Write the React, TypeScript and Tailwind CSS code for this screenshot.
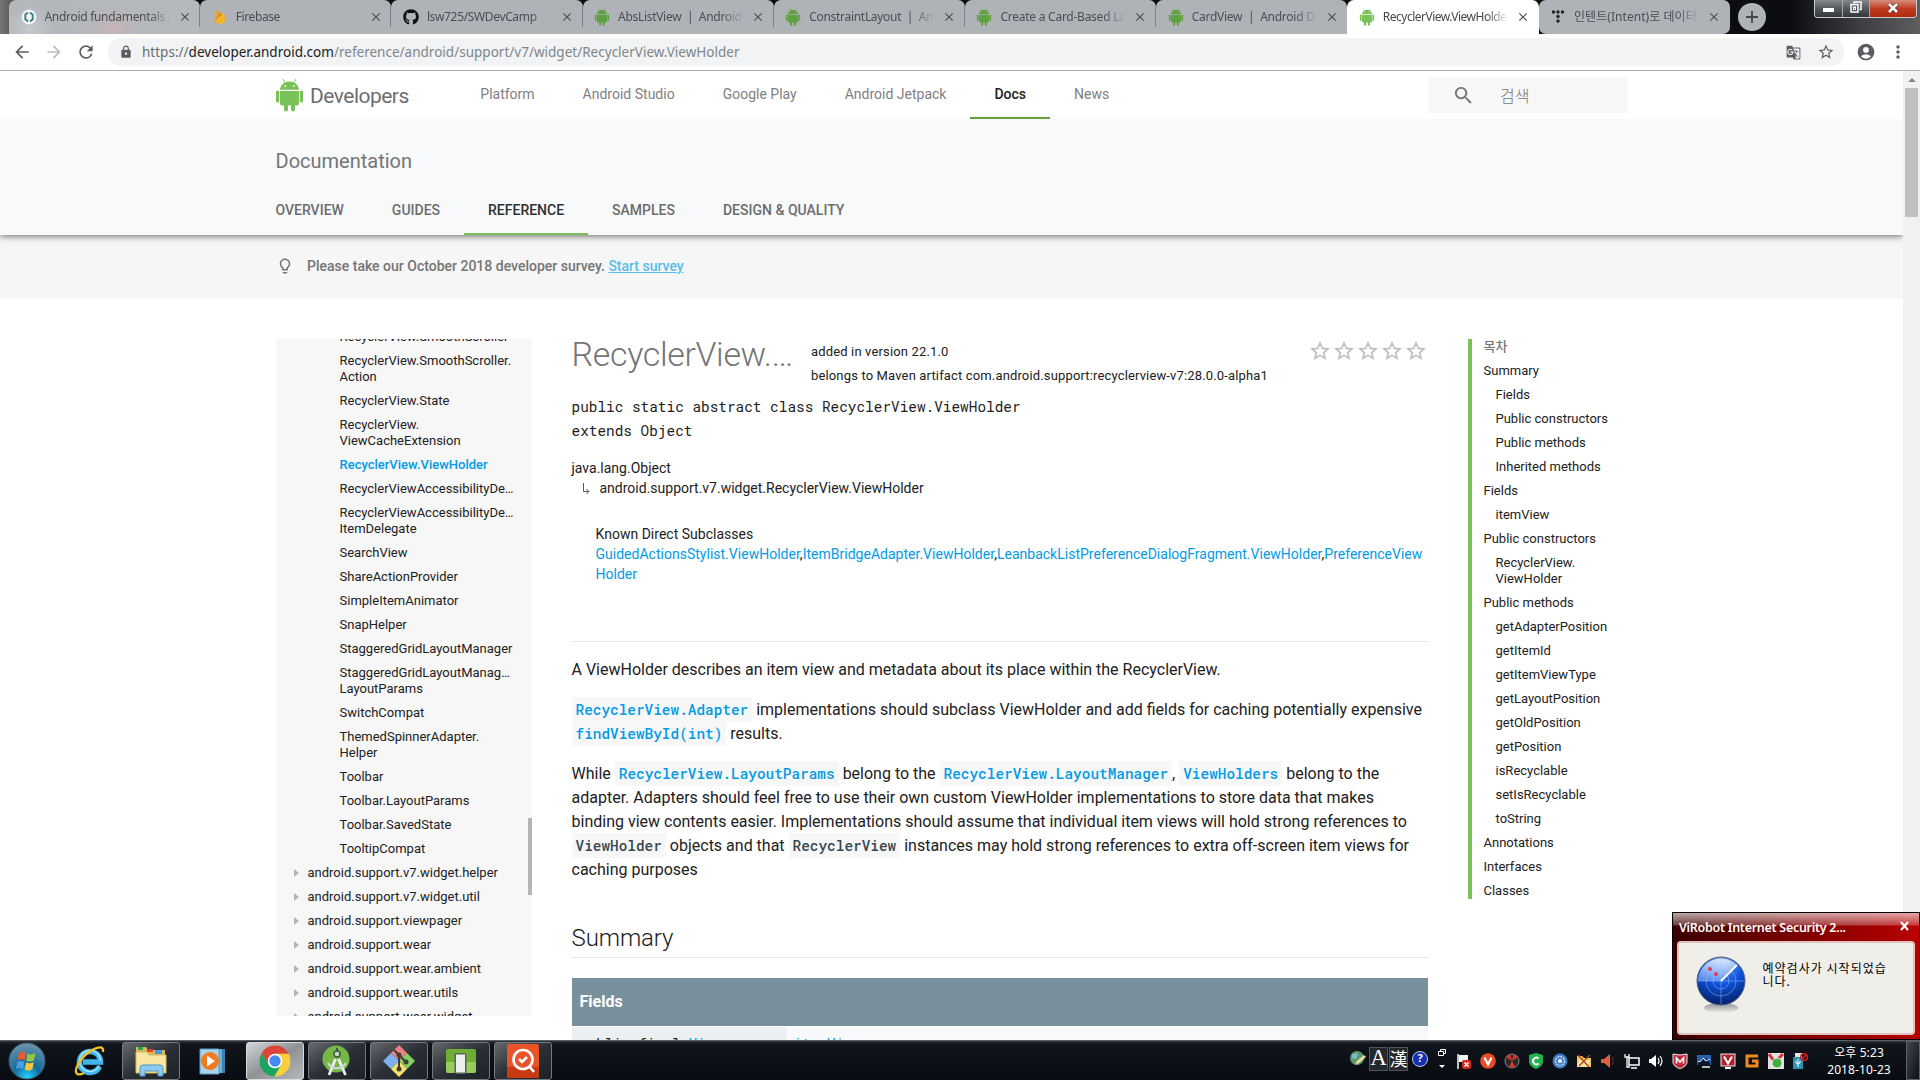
import React from "react";
import {
  MdAccountCircle,
  MdArrowBack,
  MdArrowForward,
  MdClose,
  MdGTranslate,
  MdLightbulbOutline,
  MdLock,
  MdMoreVert,
  MdRefresh,
  MdSearch,
  MdStarBorder,
} from "react-icons/md";
import { FaGithub } from "react-icons/fa";

/* ---------- Browser chrome ---------- */

function UdacityIcon() {
  return (
    <svg width="16" height="16" viewBox="0 0 16 16">
      <circle cx="8" cy="8" r="7.5" fill="#eef3f5" />
      <path d="M7 3.600 4.300 5.800v4.400L7 12.400M9 3.600l2.700 2.200v4.400L9 12.400" fill="none" stroke="#3d7f8c" strokeWidth="1.900" />
    </svg>
  );
}

function FirebaseIcon() {
  return (
    <svg width="16" height="16" viewBox="0 0 16 16">
      <path d="M2.500 12.500 4.500.5 7 5z" fill="#f2a21c" />
      <path d="M2.500 12.500 8.500 2.500 10.500 7z" fill="#e08a12" />
      <path d="M2.500 12.500 12 3.500l1.500 9-5.500 3.200z" fill="#f5b52b" />
    </svg>
  );
}

function DotsIcon() {
  return (
    <svg width="16" height="16" viewBox="0 0 16 16" fill="#222">
      <circle cx="3.500" cy="3" r="1.700" />
      <circle cx="8" cy="3" r="1.700" />
      <circle cx="12.500" cy="3" r="1.700" />
      <circle cx="8" cy="7.500" r="1.700" />
      <circle cx="8" cy="12" r="1.700" />
    </svg>
  );
}

function Droid({ color, width, height, eye }: { color: string; width: number; height: number; eye: string }) {
  return (
    <svg width={width} height={height} viewBox="0 0 29 34" fill={color} className="shrink-0">
      <path d="M5 11.800C5.300 7 9.500 3.500 14.500 3.500S23.700 7 24 11.800z" />
      <path d="M10 4.500 8 1M19 4.500 21 1" stroke={color} strokeWidth=".9" />
      <path d="M5 13h19v12.500a2 2 0 0 1-2 2h-2v4a2 2 0 0 1-4 0v-4h-3v4a2 2 0 0 1-4 0v-4H7a2 2 0 0 1-2-2z" />
      <rect x="1" y="12.500" width="3.200" height="12" rx="1.600" />
      <rect x="24.800" y="12.500" width="3.200" height="12" rx="1.600" />
      <circle cx="10.200" cy="8" r=".9" fill={eye} />
      <circle cx="18.800" cy="8" r=".9" fill={eye} />
    </svg>
  );
}

const droid = <Droid color="#5fa043" eye="#afb2b7" width={16} height={18} />;

const tabs = [
  { icon: <UdacityIcon />, title: "Android fundamentals (", tracking: "tracking-[-0.3px]" },
  { icon: <FirebaseIcon />, title: "Firebase", tracking: "tracking-[-0.4px]" },
  { icon: <FaGithub size={16} color="#111" />, title: "lsw725/SWDevCamp", tracking: "tracking-[-0.35px]" },
  { icon: droid, title: "AbsListView  |  Android", tracking: "tracking-[-0.3px]" },
  { icon: droid, title: "ConstraintLayout  |  And", tracking: "tracking-[-0.3px]" },
  { icon: droid, title: "Create a Card-Based Lay", tracking: "tracking-[-0.25px]" },
  { icon: droid, title: "CardView  |  Android Dev", tracking: "tracking-[-0.25px]" },
  {
    icon: <Droid color="#78c257" eye="#fff" width={16} height={18} />,
    title: "RecyclerView.ViewHolder",
    tracking: "tracking-[-0.5px]",
    active: true,
  },
  { icon: <DotsIcon />, title: "인텐트(Intent)로 데이터", tracking: "tracking-[0.05px]" },
];

function tabTone(i: number) {
  if (i === 7) return "bg-white text-[#45494d]";
  if (i === 8) return "rounded-b-[7px] bg-[#afb2b7] text-[#4b4f54]";
  if (i === 0)
    return "bg-[radial-gradient(circle_at_20px_30px,#c3c9cc_0px,transparent_26px),radial-gradient(circle_at_104px_30px,#c6b4b8_0px,transparent_26px),linear-gradient(90deg,#b3b6ba,#b5b8bc)] text-[#4b4f54]";
  return "bg-[#afb2b7] text-[#4b4f54]";
}

function TabStrip() {
  return (
    <div className="flex h-[34px] shrink-0 bg-[linear-gradient(90deg,#777_0px,#0b0d12_40px,#0b0d12_1790px,#3c3e41_1860px,#5c5e60_1920px)] pl-[9px] font-['Noto_Sans','Noto_Sans_CJK_KR',sans-serif]">
      {tabs.map((t, i) => (
        <div
          key={i}
          className={"flex h-[34px] w-[191.200px] shrink-0 items-center rounded-t-[7px] pl-[11.500px] " + tabTone(i)}
        >
          {t.icon}
          <span
            className={
              "ml-2 w-[124px] overflow-hidden text-[12px] whitespace-pre [mask-image:linear-gradient(90deg,#000_104px,transparent_126px)] " +
              t.tracking
            }
          >
            {t.title}
          </span>
          <MdClose size={14} className="ml-[9px]" />
          {i < 6 && <span className="ml-auto h-5 w-px bg-[#7d8086]" />}
        </div>
      ))}
      <div className="mt-[3px] ml-[8px] flex size-7 items-center justify-center rounded-full bg-[#afb2b7]">
        <svg width="12" height="12" viewBox="0 0 12 12" stroke="#45494d" strokeWidth="1.800">
          <path d="M6 0v12M0 6h12" />
        </svg>
      </div>
      <div className="mr-[3px] ml-auto flex h-[18px] w-[103px] overflow-hidden rounded-b-[4px] border border-t-0 border-[#c9cbce]">
        <div className="flex w-[28px] items-end justify-center border-r border-[#a5a7aa] bg-gradient-to-b from-[#85888c] via-[#55585c] to-[#33363b] pb-[5px]">
          <span className="h-1 w-[11px] bg-white" />
        </div>
        <div className="flex w-[27px] items-center justify-center border-r border-[#a5a7aa] bg-gradient-to-b from-[#85888c] via-[#55585c] to-[#33363b] pb-[3px]">
          <svg width="12" height="12" viewBox="0 0 12 12" fill="none" stroke="#fff" strokeWidth="1.500">
            <path d="M4 2.500V1h7v7.500H9.500" />
            <rect x="1" y="3.500" width="7" height="7.500" />
            <rect x="3.500" y="6" width="2" height="2.500" strokeWidth="1" />
          </svg>
        </div>
        <div className="flex flex-1 items-center justify-center bg-gradient-to-b from-[#d58d7d] via-[#bf3a20] to-[#b32a10] pb-[2px]">
          <svg width="12" height="10" viewBox="0 0 12 10" fill="none">
            <path d="m2 1 8 8M10 1 2 9" stroke="#50312c" strokeWidth="4" />
            <path d="m2 1 8 8M10 1 2 9" stroke="#fff" strokeWidth="2.600" />
          </svg>
        </div>
      </div>
    </div>
  );
}

function Toolbar() {
  return (
    <div className="flex h-[37px] shrink-0 items-center border-b border-[#adadad] bg-white pl-[12px] text-[#5a5d61]">
      <MdArrowBack size={20} />
      <MdArrowForward size={20} className="ml-3 text-[#babcbe]" />
      <MdRefresh size={20} className="ml-3" />
      <div className="ml-3 flex h-7 w-[1736px] items-center rounded-full bg-[#f1f3f4] pr-[9px] pl-[11px]">
        <MdLock size={14} />
        <span className="ml-[9px] font-['Noto_Sans',sans-serif] text-[13.500px] tracking-[0.01px] text-[#80868b]">
          <span className="text-[#6b6f73]">https://</span>
          <span className="text-[#202124]">developer.android.com</span>
          /reference/android/support/v7/widget/RecyclerView.ViewHolder
        </span>
        <MdGTranslate size={15} className="ml-auto" />
        <MdStarBorder size={18} className="ml-[16px]" />
      </div>
      <MdAccountCircle size={20} className="ml-3" />
      <MdMoreVert size={20} className="ml-3" />
    </div>
  );
}

/* ---------- Site header ---------- */

function SiteHeader() {
  return (
    <div className="relative z-10 h-[164px] shrink-0 bg-[#f8f9fb] shadow-[0_1px_7px_rgba(0,0,0,0.6)]">
      <div className="flex h-12 bg-white pl-[275px]">
        <div className="flex w-[181.300px] items-center">
          <Droid color="#78c257" eye="#fff" width={29} height={34} />
          <span className="mt-[3px] ml-[6px] text-[21px] tracking-[-0.52px] text-[#6e6e6e]">Developers</span>
        </div>
        <nav className="flex text-[14px] leading-[46px] text-[#808080]">
          {["Platform", "Android Studio", "Google Play", "Android Jetpack"].map((n) => (
            <span key={n} className="px-6">{n}</span>
          ))}
          <span className="border-b-2 border-[#689f38] px-6 font-medium text-[#212121]">Docs</span>
          <span className="px-6">News</span>
        </nav>
        <div className="mt-1.5 mr-[275px] ml-auto flex h-9 w-[200px] items-center rounded-[2px] bg-[#f7f7f7] pl-6 text-[#757575]">
          <MdSearch size={23} />
          <span className="ml-[25px] font-['Noto_Sans_CJK_KR',sans-serif] text-[16px] font-light">검색</span>
        </div>
      </div>
      <div className="pt-[30px] pl-[275.500px] text-[20px] leading-6 text-[#757575]">Documentation</div>
      <nav className="mt-[14px] flex pl-[251.500px] text-[14px] leading-[46px] font-medium text-[#6c6c6c]">
        <span className="px-6">OVERVIEW</span>
        <span className="px-6">GUIDES</span>
        <span className="border-b-[2px] border-[#78c257] px-6 text-[#303030]">REFERENCE</span>
        <span className="px-6">SAMPLES</span>
        <span className="px-6">DESIGN &amp; QUALITY</span>
      </nav>
    </div>
  );
}

/* ---------- Left navigation ---------- */

const classItems = [
  ["RecyclerView.SmoothScroller"],
  ["RecyclerView.SmoothScroller.", "Action"],
  ["RecyclerView.State"],
  ["RecyclerView.", "ViewCacheExtension"],
  ["RecyclerView.ViewHolder"],
  ["RecyclerViewAccessibilityDe…"],
  ["RecyclerViewAccessibilityDe…", "ItemDelegate"],
  ["SearchView"],
  ["ShareActionProvider"],
  ["SimpleItemAnimator"],
  ["SnapHelper"],
  ["StaggeredGridLayoutManager"],
  ["StaggeredGridLayoutManag…", "LayoutParams"],
  ["SwitchCompat"],
  ["ThemedSpinnerAdapter.", "Helper"],
  ["Toolbar"],
  ["Toolbar.LayoutParams"],
  ["Toolbar.SavedState"],
  ["TooltipCompat"],
];

const packages = [
  "android.support.v7.widget.helper",
  "android.support.v7.widget.util",
  "android.support.viewpager",
  "android.support.wear",
  "android.support.wear.ambient",
  "android.support.wear.utils",
  "android.support.wear.widget",
];

function SideNav() {
  return (
    <aside className="relative h-[677px] w-[256px] shrink-0 overflow-hidden bg-[#f7f7f7] text-[13px] leading-4 text-[#212121]">
      <div className="-mt-[10px] flex flex-col gap-2 whitespace-nowrap">
        {classItems.map((lines, i) => (
          <div key={i} className={i === 4 ? "pl-16 font-medium text-[#039be5]" : "pl-16"}>
            {lines.map((l) => (
              <div key={l}>{l}</div>
            ))}
          </div>
        ))}
        {packages.map((p) => (
          <div key={p} className="flex items-center pl-[18px]">
            <span className="mr-[9px] h-0 w-0 border-y-4 border-l-[5px] border-y-transparent border-l-[#b5b5b5]" />
            {p}
          </div>
        ))}
      </div>
      <div className="absolute top-[479px] right-0 h-[77px] w-1 bg-[#b4b4b4]" />
    </aside>
  );
}

/* ---------- Main article ---------- */

function Code({ link, children }: { link?: boolean; children: React.ReactNode }) {
  return (
    <code
      className={
        "bg-[#f7f7f7] px-1 py-[3px] font-['Roboto_Mono','Liberation_Mono',monospace] text-[14.400px] font-medium " +
        (link ? "text-[#039be5]" : "text-[#37474f]")
      }
    >
      {children}
    </code>
  );
}

function Article() {
  return (
    <main className="ml-10 w-[856px] shrink-0 text-[#212121]">
      <div className="flex h-[52px]">
        <h1 className="w-[239.500px] text-[34px] leading-[30px] font-light tracking-[-0.360px] whitespace-nowrap text-[#757575]">
          RecyclerView.…
        </h1>
        <div className="pt-px text-[13px] leading-6 tracking-[0.150px] whitespace-nowrap">
          <div>added in version 22.1.0</div>
          <div>belongs to Maven artifact com.android.support:recyclerview-v7:28.0.0-alpha1</div>
        </div>
        <div className="ml-auto flex text-[#bdbdbd]">
          {[0, 1, 2, 3, 4].map((n) => (
            <MdStarBorder key={n} size={24} />
          ))}
        </div>
      </div>
      <div className="mt-1 font-['Roboto_Mono','Liberation_Mono',monospace] text-[14.400px] leading-6">
        <div>public static abstract class RecyclerView.ViewHolder</div>
        <div>extends Object</div>
      </div>
      <div className="mt-[15px] text-[14px] leading-5">
        <div>java.lang.Object</div>
        <div className="flex pl-[10px]">
          <svg width="8" height="20" viewBox="0 0 8 20" fill="none" stroke="#555">
            <path d="M1.500 5v8.500h5M4.500 11l2.500 2.500-2.500 2.500" />
          </svg>
          <span className="ml-[10px]">android.support.v7.widget.RecyclerView.ViewHolder</span>
        </div>
      </div>
      <div className="mt-[26px] h-[117px] pl-6 text-[14px] leading-5 tracking-[0.013px] whitespace-nowrap">
        <div>Known Direct Subclasses</div>
        <div>
          <span className="text-[#039be5]">GuidedActionsStylist.ViewHolder</span>,
          <span className="text-[#039be5]">ItemBridgeAdapter.ViewHolder</span>,
          <span className="text-[#039be5]">LeanbackListPreferenceDialogFragment.ViewHolder</span>,
          <span className="text-[#039be5]">PreferenceView</span>
        </div>
        <div className="text-[#039be5]">Holder</div>
      </div>
      <div className="border-t border-[#e8e8e8] pt-4 text-[16px] leading-6 whitespace-nowrap">
        <p>A ViewHolder describes an item view and metadata about its place within the RecyclerView.</p>
        <p className="mt-4">
          <Code link>RecyclerView.Adapter</Code> implementations should subclass ViewHolder and add fields for caching potentially expensive
          <br />
          <Code link>findViewById(int)</Code> results.
        </p>
        <p className="mt-4">
          While <Code link>RecyclerView.LayoutParams</Code> belong to the <Code link>RecyclerView.LayoutManager</Code>,{" "}
          <Code link>ViewHolders</Code> belong to the
          <br />
          adapter. Adapters should feel free to use their own custom ViewHolder implementations to store data that makes
          <br />
          binding view contents easier. Implementations should assume that individual item views will hold strong references to
          <br />
          <Code>ViewHolder</Code> objects and that <Code>RecyclerView</Code> instances may hold strong references to extra off-screen item views for
          <br />
          caching purposes
        </p>
      </div>
      <h2 className="mt-10 border-b border-[#e5e5e5] pb-[3px] text-[24px] leading-8 font-light tracking-[-0.1px]">Summary</h2>
      <div className="mt-5 h-12 bg-[#78909c] pl-2 text-[16px] leading-[48px] font-bold text-white">Fields</div>
      <div className="mt-px flex h-[49px] font-['Roboto_Mono','Liberation_Mono',monospace] text-[14px] leading-[34px]">
        <div className="w-[214px] bg-[#eceff1] pl-2">
          public final <span className="text-[#039be5]">View</span>
        </div>
        <div className="flex-1 bg-[#f7f9fa] pl-2 text-[#039be5]">itemView</div>
      </div>
    </main>
  );
}

/* ---------- Table of contents ---------- */

const toc: { t: string; sub?: boolean; second?: string }[] = [
  { t: "Summary" },
  { t: "Fields", sub: true },
  { t: "Public constructors", sub: true },
  { t: "Public methods", sub: true },
  { t: "Inherited methods", sub: true },
  { t: "Fields" },
  { t: "itemView", sub: true },
  { t: "Public constructors" },
  { t: "RecyclerView.", second: "ViewHolder", sub: true },
  { t: "Public methods" },
  { t: "getAdapterPosition", sub: true },
  { t: "getItemId", sub: true },
  { t: "getItemViewType", sub: true },
  { t: "getLayoutPosition", sub: true },
  { t: "getOldPosition", sub: true },
  { t: "getPosition", sub: true },
  { t: "isRecyclable", sub: true },
  { t: "setIsRecyclable", sub: true },
  { t: "toString", sub: true },
  { t: "Annotations" },
  { t: "Interfaces" },
  { t: "Classes" },
];

function Toc() {
  return (
    <aside className="ml-10 flex h-[560px] flex-col gap-2 border-l-4 border-[#78c257] pl-3 text-[13px] leading-4 text-[#212121]">
      <div className="-mt-px mb-px font-['Noto_Sans_CJK_KR',sans-serif] font-medium text-[#757575]">목차</div>
      {toc.map((e, i) => (
        <div key={i} className={e.sub ? "pl-3" : ""}>
          {e.t}
          {e.second && <div>{e.second}</div>}
        </div>
      ))}
    </aside>
  );
}

/* ---------- Security popup ---------- */

function Popup() {
  return (
    <div className="absolute top-[912px] left-[1672px] h-[128px] w-[248px] border border-black bg-[linear-gradient(90deg,#3a0000,#7c0000_50%,#b80000)] font-['Noto_Sans','Noto_Sans_CJK_KR',sans-serif]">
      <div className="flex h-[28px] items-center justify-between bg-[linear-gradient(180deg,rgba(255,255,255,0.65),rgba(255,255,255,0.25)_12px,transparent_13px)] pt-[2px] pr-[8px] pl-[6px] text-[12.500px] font-semibold tracking-[-0.280px] text-white">
        <span>ViRobot Internet Security 2...</span>
        <svg width="12" height="10" viewBox="0 0 12 10" stroke="#fff" strokeWidth="2.200" className="mb-1">
          <path d="m2 1 7 8M9 1 2 9" />
        </svg>
      </div>
      <div className="mx-[4px] flex h-[94px] rounded-[4px] border-2 border-[#d08080]/40 bg-[#efeee9] pl-[16px]">
        <svg width="52" height="62" viewBox="0 0 52 62" className="mt-[12px]">
          <defs>
            <radialGradient id="ball" cx=".5" cy=".1" r=".95">
              <stop offset="0" stopColor="#7cabf5" />
              <stop offset=".5" stopColor="#0d52dc" />
              <stop offset="1" stopColor="#041a5c" />
            </radialGradient>
            <linearGradient id="gloss" x1="0" y1="0" x2="0" y2="1">
              <stop offset="0" stopColor="#fff" stopOpacity=".75" />
              <stop offset="1" stopColor="#9cc4ff" stopOpacity=".5" />
            </linearGradient>
            <linearGradient id="shade" x1="0" y1="0" x2="0" y2="1">
              <stop offset="0" stopColor="#667" stopOpacity=".7" />
              <stop offset="1" stopColor="#667" stopOpacity="0" />
            </linearGradient>
          </defs>
          <ellipse cx="26" cy="53" rx="17" ry="5" fill="url(#shade)" />
          <circle cx="26" cy="26" r="24" fill="url(#ball)" stroke="#566078" />
          <path d="M3 26A23 23 0 0 1 42 10L26 26z" fill="url(#gloss)" />
          <g fill="none" stroke="#a9c8ff" strokeOpacity=".45">
            <circle cx="26" cy="26" r="15" />
            <circle cx="26" cy="26" r="8" />
            <path d="M3 26h46M26 3v46" />
          </g>
          <path d="M26 26 42 10" stroke="#fff" strokeWidth="1.800" />
          <circle cx="15" cy="14" r="2" fill="#e23a4a" />
          <circle cx="21" cy="19" r="2" fill="#e23a4a" />
        </svg>
        <p className="mt-[19px] ml-[15.500px] font-['Noto_Sans_CJK_KR',sans-serif] text-[12px] leading-[12.500px] tracking-[1.020px] whitespace-nowrap text-black">
          예약검사가 시작되었습
          <br />
          니다.
        </p>
      </div>
    </div>
  );
}

/* ---------- Taskbar ---------- */

function StartOrb() {
  return (
    <svg width="40" height="38" viewBox="0 0 40 38">
      <defs>
        <radialGradient id="orb" cx=".5" cy=".95" r=".95">
          <stop offset="0" stopColor="#25d3ff" />
          <stop offset=".4" stopColor="#136a9c" />
          <stop offset="1" stopColor="#6f95ab" />
        </radialGradient>
      </defs>
      <circle cx="20" cy="19" r="18" fill="url(#orb)" stroke="#38586c" />
      <path d="M12 11c2.500-1.500 5-1.500 7-.3l-1.300 7.300c-2-1.200-4.500-1.200-7.200.2z" fill="#ea5a28" />
      <path d="M20.500 11.500c2.500 1.300 5 1.200 8-.5l-1.500 7.500c-2.700 1.400-5.300 1.400-7.700.2z" fill="#93c83e" />
      <path d="M10.300 19.800c2.500-1.200 5-1.200 7.200 0l-1.300 7.200c-2.200-1.300-4.700-1.300-7.200 0z" fill="#4e9de0" />
      <path d="M19 20.500c2.500 1.200 5 1.100 7.800-.3l-1.500 7.300c-2.800 1.400-5.300 1.300-7.600 0z" fill="#fcc63c" />
    </svg>
  );
}

function IeIcon() {
  return (
    <svg width="34" height="34" viewBox="0 0 34 34" fill="none">
      <path d="M27.500 22.500A10.500 10.500 0 1 1 28.500 18H11" stroke="#3fb6ef" strokeWidth="5.500" />
      <path d="M27.500 21.500A10.500 10.500 0 1 1 28.500 17" stroke="#a5e4fc" strokeWidth="1.500" />
      <path d="M31 8c1-5-3-6.500-11-2C10 12 3 23 4 28c.5 3 4 3 8 1" stroke="#f6c21c" strokeWidth="2.200" />
    </svg>
  );
}

function ExplorerIcon() {
  return (
    <svg width="34" height="34" viewBox="0 0 34 34">
      <path d="M2 3h10l2 3h17v22H2z" fill="#d9b65a" />
      <path d="M4 3h5v3H4z" fill="#2aa84a" />
      <path d="M13 5h6v3h-6z" fill="#d8452c" />
      <path d="M21 6h7v4h-7z" fill="#3f9be0" />
      <path d="M2 8h11l2 3h17v18H2z" fill="#f8e7a0" stroke="#d6bb62" />
      <path d="M6 32V24q0-3 3-3h17q3 0 3 3v8h-5v-5H11v5z" fill="#8ccbf0" stroke="#4a94c4" />
    </svg>
  );
}

function MediaIcon() {
  return (
    <svg width="28" height="28" viewBox="0 0 28 28">
      <path d="M8 2h18v24H8z" fill="#3d7fae" />
      <path d="M5 2h18v24H5z" fill="#6fb0d8" />
      <path d="M1 2h19v25H1z" fill="#a9d3ec" stroke="#5b9bc4" />
      <circle cx="11" cy="14" r="9" fill="#f17a1e" />
      <path d="m8 8.500 8 5.500-8 5.500z" fill="#fff" />
    </svg>
  );
}

function ChromeIcon() {
  return (
    <svg width="32" height="32" viewBox="0 0 30 30">
      <path d="M15 8.300h12.900A14.500 14.500 0 0 0 2.440 7.750L9 18z" fill="#dc4437" />
      <path d="M2.440 7.750A14.500 14.500 0 0 0 14.500 29.500L20.800 18.500 9.200 18.500z" fill="#1da462" />
      <path d="M14.500 29.500A14.500 14.500 0 0 0 27.900 8.300H15L21 18.300z" fill="#f9cf3e" />
      <circle cx="15" cy="15" r="6.800" fill="#fff" />
      <circle cx="15" cy="15" r="5.300" fill="#4587f3" />
    </svg>
  );
}

function StudioIcon() {
  return (
    <svg width="30" height="34" viewBox="0 0 30 34">
      <circle cx="14" cy="15" r="13.500" fill="#76b748" />
      <path d="M15 4v4" stroke="#3f5a37" strokeWidth="2" />
      <circle cx="15" cy="10" r="3" fill="#c8d8c4" stroke="#3f5a37" strokeWidth="1.500" />
      <path d="M13.500 15 7 31M16.500 15l7 16" stroke="#eceff1" strokeWidth="2.800" />
      <path d="M6 19c4 7 14 7 18 0" fill="none" stroke="#cfd8dc" strokeWidth="2.200" />
    </svg>
  );
}

function GitIcon() {
  return (
    <svg width="34" height="34" viewBox="0 0 34 34">
      <path d="m17 1 8 8-8 8-8-8z" fill="#f07f7f" />
      <path d="m9 9 8 8-8 8-8-8z" fill="#7fb0f0" />
      <path d="m25 9 8 8-8 8-8-8z" fill="#86cf5a" />
      <path d="m17 17 8 8-8 8-8-8z" fill="#fae06a" />
      <path d="M12 6l5 5v15M17 11l7 7" stroke="#3c3c3c" strokeWidth="2" fill="none" />
      <circle cx="17" cy="11" r="2.500" fill="#3c3c3c" />
      <circle cx="24" cy="18" r="2.500" fill="#3c3c3c" />
      <circle cx="17" cy="25" r="2.500" fill="#3c3c3c" />
    </svg>
  );
}

function EmulatorIcon() {
  return (
    <svg width="30" height="28" viewBox="0 0 30 28">
      <rect y="2" width="30" height="24" rx="2" fill="#6fae35" />
      <path d="M0 15h30v9a2 2 0 0 1-2 2H2a2 2 0 0 1-2-2z" fill="#97cc5c" />
      <rect x="8.500" y="6" width="12" height="21" rx="2" fill="#5a6353" />
      <rect x="10" y="7.500" width="9" height="18" fill="#eee" />
    </svg>
  );
}

function SearchAppIcon() {
  return (
    <svg width="32" height="34" viewBox="0 0 32 34">
      <rect width="32" height="34" rx="2" fill="#ea5327" />
      <path d="M0 23h32v9a2 2 0 0 1-2 2H2a2 2 0 0 1-2-2z" fill="#c73a12" />
      <circle cx="16" cy="15.500" r="9.500" fill="none" stroke="#fff" strokeWidth="2.600" />
      <path d="m12 15 3 3 5-5M22 22l5 6" fill="none" stroke="#fff" strokeWidth="2.600" />
    </svg>
  );
}

function TaskButton({ active, children }: { active?: boolean; children: React.ReactNode }) {
  return (
    <div
      className={
        "flex h-[38px] w-[58px] shrink-0 items-center justify-center rounded-[3px] border " +
        (active
          ? "border-[#d8dadc] bg-gradient-to-br from-[#d3d5d7] via-[#909396] to-[#b5b8ba]"
          : "border-[#75797d] bg-gradient-to-br from-[#66696c] via-[#2b3036] to-[#1c2126]")
      }
    >
      {children}
    </div>
  );
}

const trayIcons: React.ReactNode[] = [
  <>
    <path d="M2 1v15" stroke="#fff" strokeWidth="1.500" />
    <path d="M3 2h9v7H3z" fill="#f4f4f4" />
    <rect x="6" y="7" width="9" height="9" rx="2" fill="#d8281e" />
    <path d="m8.500 9.500 4 4m0-4-4 4" stroke="#fff" strokeWidth="1.500" />
  </>,
  <>
    <circle cx="8" cy="8" r="7.800" fill="#ea4a24" />
    <path d="m4.500 4.500 3.500 7 3.500-7" fill="none" stroke="#fff" strokeWidth="2.200" />
  </>,
  <>
    <circle cx="8" cy="8" r="7" fill="#292929" stroke="#888" />
    <path d="M8 8 2.500 4.500a6 6 0 0 1 4-3zM8 8l5.500-3.500a6 6 0 0 0-4-3zM8 8l3 5.500a6 6 0 0 1-6 0z" fill="#d8322a" />
  </>,
  <>
    <path d="M8 0 15 2v6c0 4-3 6.500-7 8-4-1.500-7-4-7-8V2z" fill="#22b14c" />
    <path d="M10.500 5.500a3.300 3.300 0 1 0 0 5" fill="none" stroke="#fff" strokeWidth="2" />
  </>,
  <>
    <circle cx="8" cy="8" r="7.500" fill="#3e7bc4" />
    <circle cx="8" cy="8" r="4.500" fill="none" stroke="#c9dcf3" strokeWidth="1.500" strokeDasharray="2 1" />
    <circle cx="8" cy="8" r="2" fill="#eaf2fc" />
  </>,
  <>
    <path d="M1 3h5l2 2h7v9H1z" fill="#edc95a" />
    <path d="M3 7h11l-2 7H1z" fill="#f8e7a0" />
    <path d="m2 2 11 12M14 2 3 13" stroke="#b63a20" strokeWidth="1.300" />
  </>,
  <>
    <path d="M1 6h3l6-5v14l-6-5H1z" fill="#e0603c" />
    <path d="M12 4q3 4 0 8" fill="none" stroke="#6b2a1c" />
  </>,
  <>
    <rect x="5" y="5" width="10" height="7" fill="none" stroke="#fff" strokeWidth="1.500" />
    <path d="M7 15h6M1 1v3h4V1M3 4v10h3" stroke="#fff" strokeWidth="1.300" fill="none" />
  </>,
  <>
    <path d="M1 6h2l5-4v12l-5-4H1z" fill="#fff" />
    <path d="M10 5q2 3 0 6M12 3q4 5 0 10" fill="none" stroke="#fff" strokeWidth="1.200" />
  </>,
  <>
    <path d="m1 1 7 1 7-1v8c0 3-3 5-7 7-4-2-7-4-7-7z" fill="#c12b3b" stroke="#eee" />
    <path d="M4.500 10.500V5L8 9l3.500-4v5.500" fill="none" stroke="#fff" strokeWidth="1.600" />
  </>,
  <>
    <rect x="1" y="2" width="14" height="10" fill="#2a63a8" />
    <path d="M2 9h3l1-5 3 5 2-4 3 5v2H2z" fill="#0b1730" />
    <path d="M2 9 5 8l2-3 3 3 4-2" stroke="#cfe6ff" strokeWidth="1" fill="none" />
    <path d="M6 14h8" stroke="#bbb" strokeWidth="2" />
  </>,
  <>
    <rect x="1" y="1" width="14" height="12" fill="#b5202b" stroke="#eee" />
    <path d="m4 3.500 4 7 4-7M5 15h6" fill="none" stroke="#fff" strokeWidth="2" />
  </>,
  <path key="g" d="M14 3H3v10h10V8H8" fill="none" stroke="#f08a1c" strokeWidth="3" />,
  <>
    <rect width="16" height="16" fill="#e5e0de" />
    <path d="M1 1 6 8M15 1l-5 5" stroke="#d8323e" strokeWidth="3" />
    <circle cx="9" cy="10" r="5" fill="#3fae3c" stroke="#e9f6e8" />
  </>,
  <>
    <rect x="3" width="7" height="4" fill="#e5e5e5" />
    <rect x="1" y="4" width="10" height="12" fill="#2c93b8" />
    <path d="M6 6v8M4 8v2l2 1 2-1V8" stroke="#fff" fill="none" />
    <circle cx="12" cy="4" r="3.300" fill="none" stroke="#dc1f1f" strokeWidth="1.500" />
    <path d="m10 6 4-4" stroke="#dc1f1f" strokeWidth="1.500" />
  </>,
];

function Taskbar() {
  return (
    <div className="flex h-10 shrink-0 items-center border-t border-[#596069] bg-[linear-gradient(180deg,#30363d_0px,#10151b_3px,#080c12_100%)]">
      <div className="ml-[7px] w-10"><StartOrb /></div>
      <div className="ml-[25px] w-[34px]"><IeIcon /></div>
      <div className="ml-[16px] flex items-center gap-1">
        <TaskButton><ExplorerIcon /></TaskButton>
        <div className="flex w-[58px] justify-center"><MediaIcon /></div>
        <TaskButton active><ChromeIcon /></TaskButton>
        <TaskButton><StudioIcon /></TaskButton>
        <TaskButton><GitIcon /></TaskButton>
        <TaskButton><EmulatorIcon /></TaskButton>
        <TaskButton><SearchAppIcon /></TaskButton>
      </div>
      <div className="ml-auto flex items-center">
        <svg width="18" height="18" viewBox="0 0 18 18" className="mb-1">
          <circle cx="8" cy="8" r="7" fill="#5e9a66" />
          <path d="M3 5q3-3 6-1l-2 5-4-1z" fill="#7eb8dc" />
          <path d="m6 15 2-4 7-6 2 2-7 6z" fill="#ecd9a8" />
        </svg>
        <div className="mb-1 ml-[2px] flex h-6 w-[19px] items-center justify-center border border-[#50555a] bg-[#23282d] font-['Liberation_Serif',serif] text-[23px] text-white">A</div>
        <div className="mb-1 ml-px flex h-6 w-[19px] items-center justify-center border border-[#50555a] bg-[#23282d] font-['Noto_Sans_CJK_KR',sans-serif] text-[18px] text-white">漢</div>
        <div className="mb-1 ml-[4px] flex size-[16px] items-center justify-center rounded-full border border-[#b9c7ee] bg-[#1530b0] font-['Noto_Sans',sans-serif] text-[11px] font-bold text-white">?</div>
        <svg width="10" height="22" viewBox="0 0 10 22" className="mr-[9px] mb-[4px] ml-[9px]" fill="none" stroke="#fff">
          <path d="M3.500 3V1.500h5v4H7M1.500 3.500h5v4h-5z" />
          <path d="M2 17h6l-3 3z" fill="#fff" stroke="none" />
        </svg>
        <div className="flex items-center gap-2">
          {trayIcons.map((icon, i) => (
            <svg key={i} width="16" height="16" viewBox="0 0 16 16">{icon}</svg>
          ))}
        </div>
        <div className="mr-[12px] ml-[16px] w-[70px] text-center font-['Noto_Sans','Noto_Sans_CJK_KR',sans-serif] text-[12px] leading-[17px] tracking-[0.1px] whitespace-nowrap text-white">
          <div>오후 5:23</div>
          <div>2018-10-23</div>
        </div>
        <div className="h-[39px] w-[14px] border border-[#596069] bg-gradient-to-br from-[#41474d] to-[#0c1116]" />
      </div>
    </div>
  );
}

export default function App() {
  return (
    <div className="relative flex h-[1080px] w-[1920px] flex-col overflow-hidden bg-white font-['Roboto','Noto_Sans_CJK_KR',sans-serif]">
      <TabStrip />
      <Toolbar />
      <div className="flex min-h-0 flex-1 overflow-hidden">
        <div className="flex w-[1903px] shrink-0 flex-col overflow-hidden">
          <SiteHeader />
          <div className="flex h-16 shrink-0 items-center bg-[#f6f6f6] pb-[2px] pl-[275.500px] text-[14px] font-medium text-[#757575]">
            <MdLightbulbOutline size={18} />
            <span className="ml-[13.500px]">
              Please take our October 2018 developer survey. <span className="text-[#58bdec] underline">Start survey</span>
            </span>
          </div>
          <div className="flex pt-10 pl-[275.500px]">
            <SideNav />
            <Article />
            <Toc />
          </div>
        </div>
        <div className="flex flex-1 flex-col items-center bg-[#f1f1f1] pt-[7px]">
          <span className="h-0 w-0 border-x-[4px] border-b-[4px] border-x-transparent border-b-[#888]" />
          <span className="mt-[6px] h-[129px] w-[13px] bg-[#c1c1c1]" />
        </div>
      </div>
      <Taskbar />
      <Popup />
    </div>
  );
}
